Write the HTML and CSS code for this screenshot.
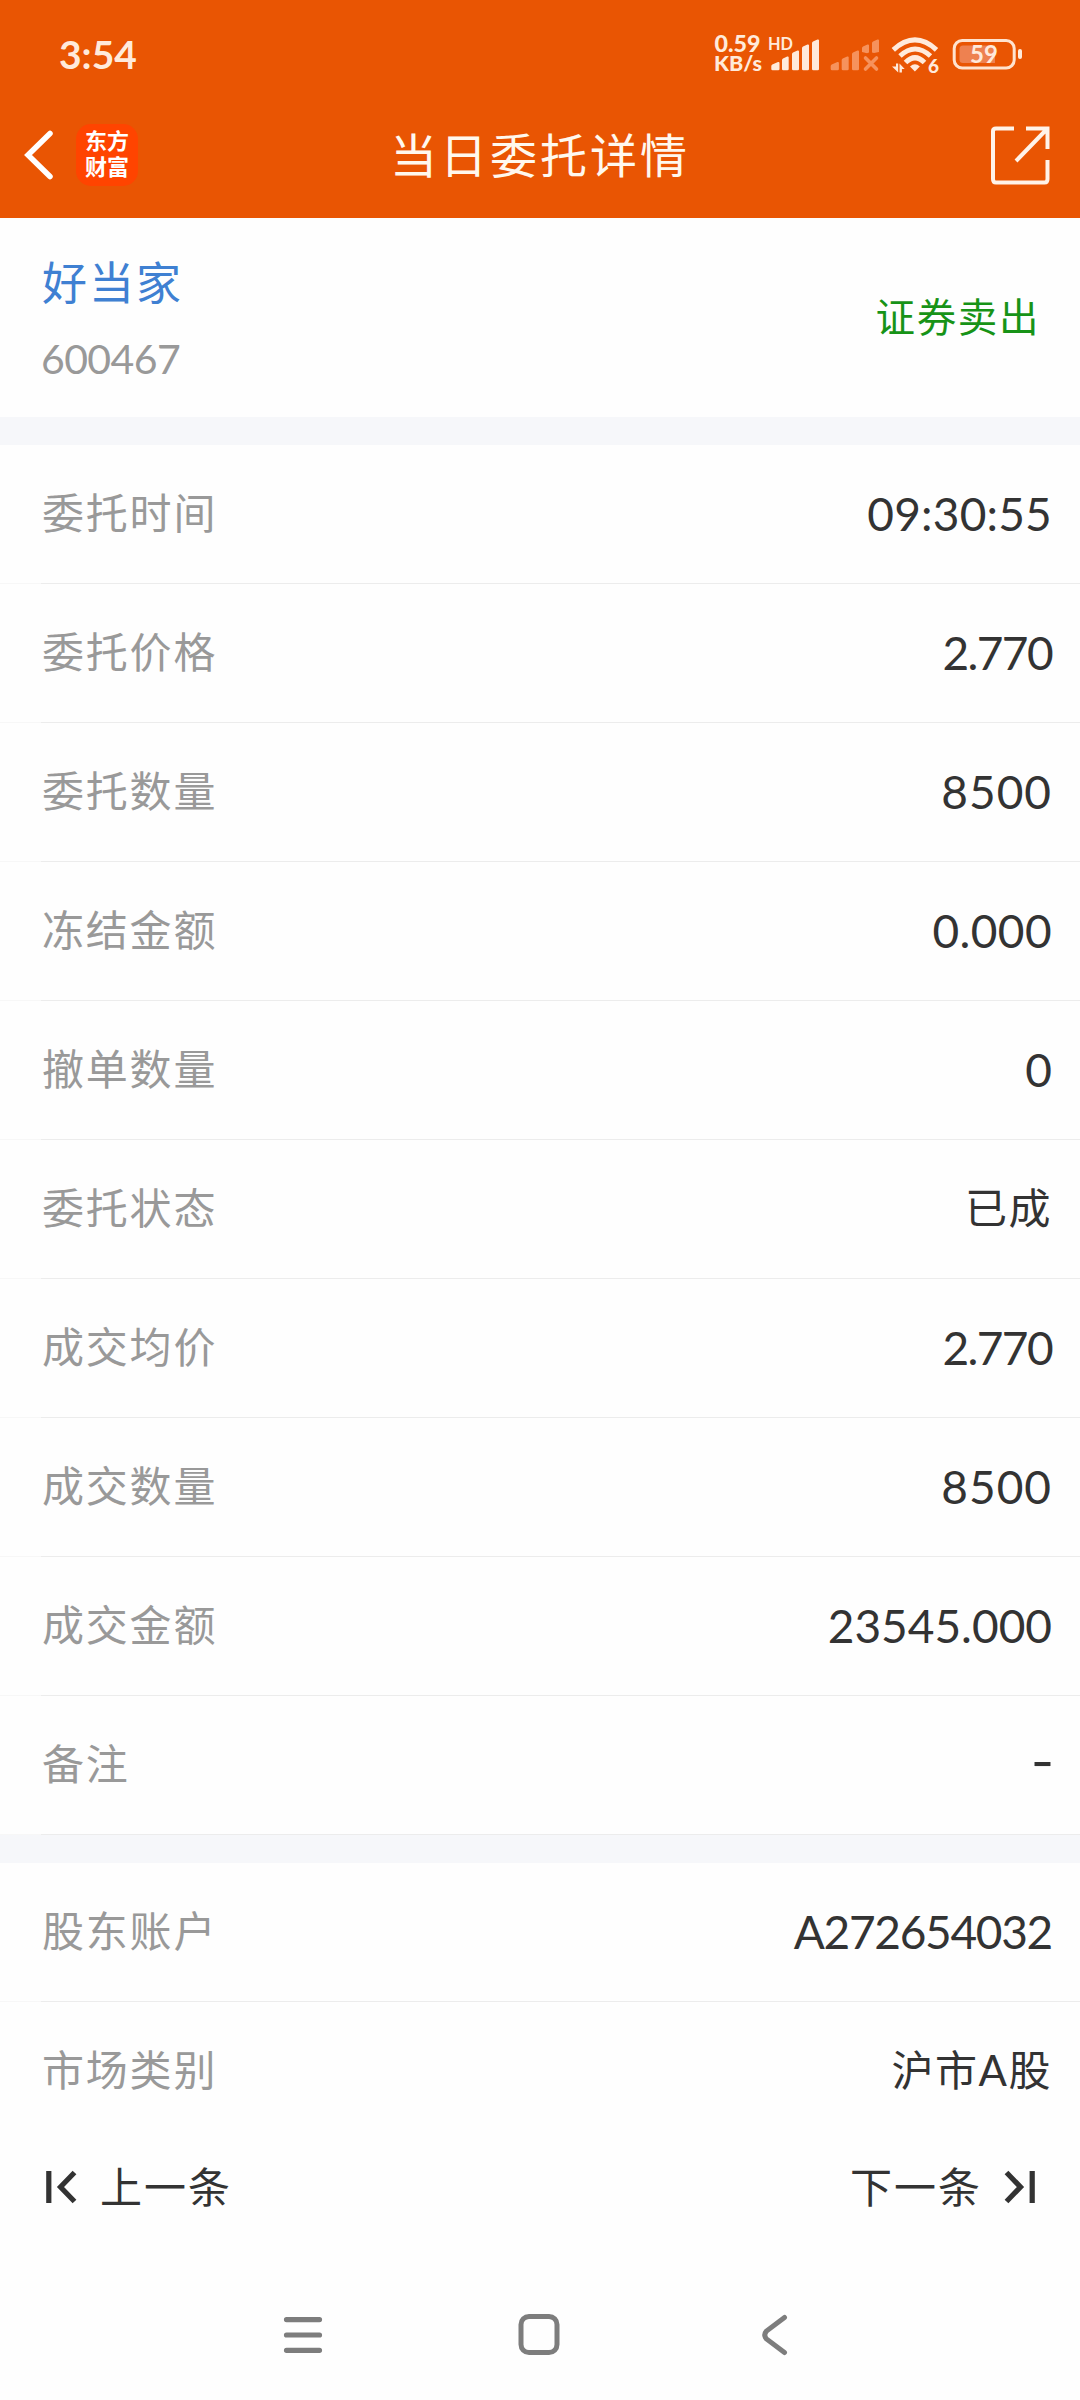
FILE: index.html
```html
<!DOCTYPE html>
<html lang="zh-CN">
<head>
<meta charset="utf-8">
<title>当日委托详情</title>
<link rel="stylesheet" href="styles.css">
</head>
<body>
<header class="top">
  <div class="status">
    <span class="clock">3:54</span>
    <svg width="313" height="54" viewBox="710 27 313 54" fill="#ffeadb">
      <text class="rate" x="714.500" y="52" textLength="46" lengthAdjust="spacingAndGlyphs">0.59</text>
      <text class="unit" x="714" y="70.500" textLength="48" lengthAdjust="spacingAndGlyphs">KB/s</text>
      <text class="hd" x="768" y="50" textLength="25" lengthAdjust="spacingAndGlyphs">HD</text>
      <path d="M771.300 69V66q0-1 1-1.500L778 62q1.500-.4 1.500 1V69q0 1.300-1.300 1.300h-5.600q-1.300 0-1.300-1.300z"/>
      <path d="M782 69V60q0-1 1-1.500l4.200-2q1.500-.4 1.500 1V69q0 1.300-1.300 1.300h-4.100q-1.300 0-1.300-1.300z"/>
      <path d="M792 69V54q0-1 1-1.500l4.500-2q1.500-.4 1.500 1V69q0 1.300-1.300 1.300h-4.400q-1.300 0-1.300-1.300z"/>
      <path d="M802 69V48q0-1 1-1.500l4.500-2q1.500-.4 1.500 1V69q0 1.300-1.300 1.300h-4.400q-1.300 0-1.300-1.300z"/>
      <path d="M812 69V43q0-1 1-1.500l4.500-2q1.500-.4 1.500 1V69q0 1.300-1.300 1.300h-4.400q-1.300 0-1.300-1.300z"/>
      <g fill="#f6925c">
        <path d="M830.700 69V66q0-1 1-1.500l5.700-2.500q1.500-.4 1.500 1V69q0 1.300-1.300 1.300h-5.600q-1.300 0-1.300-1.300z"/>
        <path d="M841.700 69V60q0-1 1-1.500l4.500-2q1.500-.4 1.500 1V69q0 1.300-1.300 1.300h-4.400q-1.300 0-1.300-1.300z"/>
        <path d="M852 69V54q0-1 1-1.500l4.500-2q1.500-.4 1.500 1V69q0 1.300-1.300 1.300h-4.400q-1.300 0-1.300-1.300z"/>
        <path d="M862 52V48q0-1 1-1.500l4.500-2q1.500-.4 1.500 1V52.500l-2 .8z"/>
        <path d="M872 52.500V43q0-1 1-1.500l4.500-2q1.500-.4 1.500 1V52l-5 1z"/>
        <path d="M865.500 58L876.500 69M876.500 58L865.500 69" stroke="#f6925c" stroke-width="3.600" stroke-linecap="round"/>
      </g>
      <g fill="none" stroke="#ffeadb" stroke-width="5">
        <path d="M893.300 49.800Q915 30 936.500 49.800"/>
        <path d="M900 56Q915 42 930.500 56"/>
        <path d="M905.500 62.500Q915 53 924.500 62.500"/>
      </g>
      <path d="M910 66.500q5-4.500 9.800 0l-4.900 5z"/>
      <path d="M892 66.500h4V63.500h2.200V72.500zM899.500 63.500l0 9h2.400V69h2.800z"/>
      <text class="gen" x="928" y="72.500">6</text>
      <rect x="954.200" y="40.500" width="60" height="27.500" rx="8" fill="none" stroke="#ffe3cf" stroke-width="3"/>
      <path d="M963 45.500h32v17.500h-32q-3.500 0-3.500-3.500v-10.500q0-3.500 3.500-3.500z" fill="#ee8150"/>
      <rect x="1018" y="49" width="4" height="10" rx="2"/>
      <text class="level" x="984" y="63" text-anchor="middle">59</text>
    </svg>
  </div>
  <div class="nav">
    <div class="nav-left">
      <svg width="30" height="50" viewBox="0 0 30 50"><path d="M27 3.500L5 25L27 46.500" fill="none" stroke="#fff" stroke-width="5.500" stroke-linecap="round" stroke-linejoin="miter"/></svg>
      <div class="brand"><span>东方</span><span>财富</span></div>
    </div>
    <h1>当日委托详情</h1>
    <svg width="60" height="60" viewBox="0 0 60 60" fill="none" stroke="#fff3e9" stroke-width="4">
      <path d="M24 3.500H6Q3 3.500 3 6V54Q3 57.500 6 57.500H54.500Q57.500 57.500 57.500 54V35"/>
      <path d="M36 3.500H57.500V24M56.500 4.500L26 36"/>
    </svg>
  </div>
</header>
<section class="stock">
  <div class="ident"><span class="name">好当家</span><span class="code">600467</span></div>
  <span class="side">证券卖出</span>
</section>
<section class="group">
  <div class="row"><span class="label">委托时间</span><span class="num time">09:30:55</span></div>
  <div class="row"><span class="label">委托价格</span><span class="num price">2.770</span></div>
  <div class="row"><span class="label">委托数量</span><span class="num qty">8500</span></div>
  <div class="row"><span class="label">冻结金额</span><span class="num zero">0.000</span></div>
  <div class="row"><span class="label">撤单数量</span><span class="num">0</span></div>
  <div class="row"><span class="label">委托状态</span><span class="word">已成</span></div>
  <div class="row"><span class="label">成交均价</span><span class="num price">2.770</span></div>
  <div class="row"><span class="label">成交数量</span><span class="num qty">8500</span></div>
  <div class="row"><span class="label">成交金额</span><span class="num amount">23545.000</span></div>
  <div class="row"><span class="label">备注</span><span class="num dash">-</span></div>
</section>
<section class="group">
  <div class="row"><span class="label">股东账户</span><span class="num account">A272654032</span></div>
  <div class="row last"><span class="label">市场类别</span><span class="word">沪市A股</span></div>
</section>
<div class="pager">
  <div class="step prev">
    <svg width="32" height="34" viewBox="0 0 32 34" fill="none" stroke="#333" stroke-width="5.200"><path d="M2.800 1V33M28.500 2.500L14.500 17L28.500 31.500"/></svg>
    <span>上一条</span>
  </div>
  <div class="step next">
    <span>下一条</span>
    <svg width="32" height="34" viewBox="0 0 32 34" fill="none" stroke="#333" stroke-width="5.200"><path d="M29.200 1V33M3.500 2.500L17.500 17L3.500 31.500"/></svg>
  </div>
</div>
<nav class="system">
  <svg width="40" height="44" viewBox="0 0 40 44" fill="none" stroke="#7d7d7d" stroke-width="5.200" stroke-linecap="round"><path d="M3.500 6.600H36.500M3.500 22H36.500M3.500 37.300H36.500"/></svg>
  <svg width="44" height="44" viewBox="0 0 44 44" fill="none" stroke="#7d7d7d" stroke-width="5"><rect x="4" y="3.500" width="36" height="36" rx="8"/></svg>
  <svg width="28" height="44" viewBox="0 0 28 44" fill="none" stroke="#7d7d7d" stroke-width="5" stroke-linecap="round"><path d="M24.500 4.500L6.500 18Q3 22 6.500 26L24.500 39.500"/></svg>
</nav>
</body>
</html>
```

FILE: styles.css
```css
* { box-sizing: border-box; }
body {
  margin: 0;
  width: 1080px;
  height: 2400px;
  background: #fefefe;
  color: #333;
  font-family: Lato, "Noto Sans CJK SC", sans-serif;
  display: flex;
  flex-direction: column;
  overflow: hidden;
}
body > * { flex: none; }
svg { display: block; flex: none; }
span, h1 { white-space: nowrap; }

.top { height: 218px; background: #e95503; }
.status {
  height: 94px;
  padding: 14px 57px 0 59px;
  display: flex;
  justify-content: space-between;
  align-items: center;
  color: #ffeadb;
}
.clock { font-size: 39px; font-weight: 700; line-height: 46px; }
.rate { font-size: 22px; font-weight: 900; }
.unit { font-size: 20px; font-weight: 900; }
.hd { font-size: 16.5px; font-weight: 700; }
.gen { font-size: 19px; font-weight: 900; }
.level { font-size: 24px; font-weight: 700; }

.nav {
  height: 122px;
  padding: 0 30px 0 23px;
  display: grid;
  grid-template-columns: 200px 1fr 200px;
  align-items: center;
}
.nav > svg { justify-self: end; }
.nav-left { display: flex; align-items: center; gap: 23px; }
.brand {
  width: 62px;
  height: 62px;
  border-radius: 15px;
  background: #ff4400;
  color: #fff;
  display: flex;
  flex-direction: column;
  align-items: center;
  justify-content: center;
  padding-bottom: 3px;
  font-size: 22px;
  font-weight: 700;
  line-height: 26px;
}
h1 {
  margin: 0 0 0 7px;
  text-align: center;
  font-size: 47px;
  font-weight: 400;
  letter-spacing: 3px;
  line-height: 60px;
  color: #fff8ee;
}

.stock {
  height: 199px;
  padding: 0 40px 0 42px;
  display: flex;
  justify-content: space-between;
  align-items: center;
}
.ident { padding-top: 7px; display: flex; flex-direction: column; }
.name { font-size: 45px; letter-spacing: 2px; line-height: 76px; color: #3f80d2; }
.code { margin-left: -1px; font-size: 41px; letter-spacing: -0.6px; line-height: 76px; color: #999; }
.side { padding-bottom: 6px; font-size: 39.5px; letter-spacing: 1.6px; color: #179317; }

.group { border-top: 28px solid #f6f7fa; }
.row {
  height: 139px;
  padding: 0 28px 0 42px;
  background: linear-gradient(90deg, #f7f7f7 41px, #ececec 41px) bottom / 100% 1px no-repeat;
  display: flex;
  justify-content: space-between;
  align-items: center;
}
.row.last { background: none; }
.label { padding-bottom: 8px; font-size: 42px; letter-spacing: 1.8px; color: #999; }
.word { padding-bottom: 8px; font-size: 42px; letter-spacing: 1.5px; }
.num { padding-bottom: 2px; font-size: 46px; }
.time { letter-spacing: 0.2px; }
.price { letter-spacing: -1.6px; padding-right: 0; }
.qty { letter-spacing: 1px; }
.zero { letter-spacing: 0.4px; }
.amount { letter-spacing: 0; }
.dash { font-family: Inter, sans-serif; font-size: 50px; margin-right: -2px; padding-bottom: 8px; }
.account { letter-spacing: -1.3px; }

.pager {
  height: 92px;
  padding: 0 45px 0 46px;
  display: flex;
  justify-content: space-between;
  align-items: center;
  font-size: 42px;
  letter-spacing: 2px;
}
.pager span { padding-bottom: 6px; }
.pager svg { margin-bottom: 1px; }
.step { display: flex; align-items: center; }
.prev { gap: 22px; }
.next { gap: 21px; }
.system {
  margin-top: 80px;
  height: 87px;
  padding: 0 0 0 283px;
  display: grid;
  grid-template-columns: 234px 243px 28px;
  align-items: start;
}
```
